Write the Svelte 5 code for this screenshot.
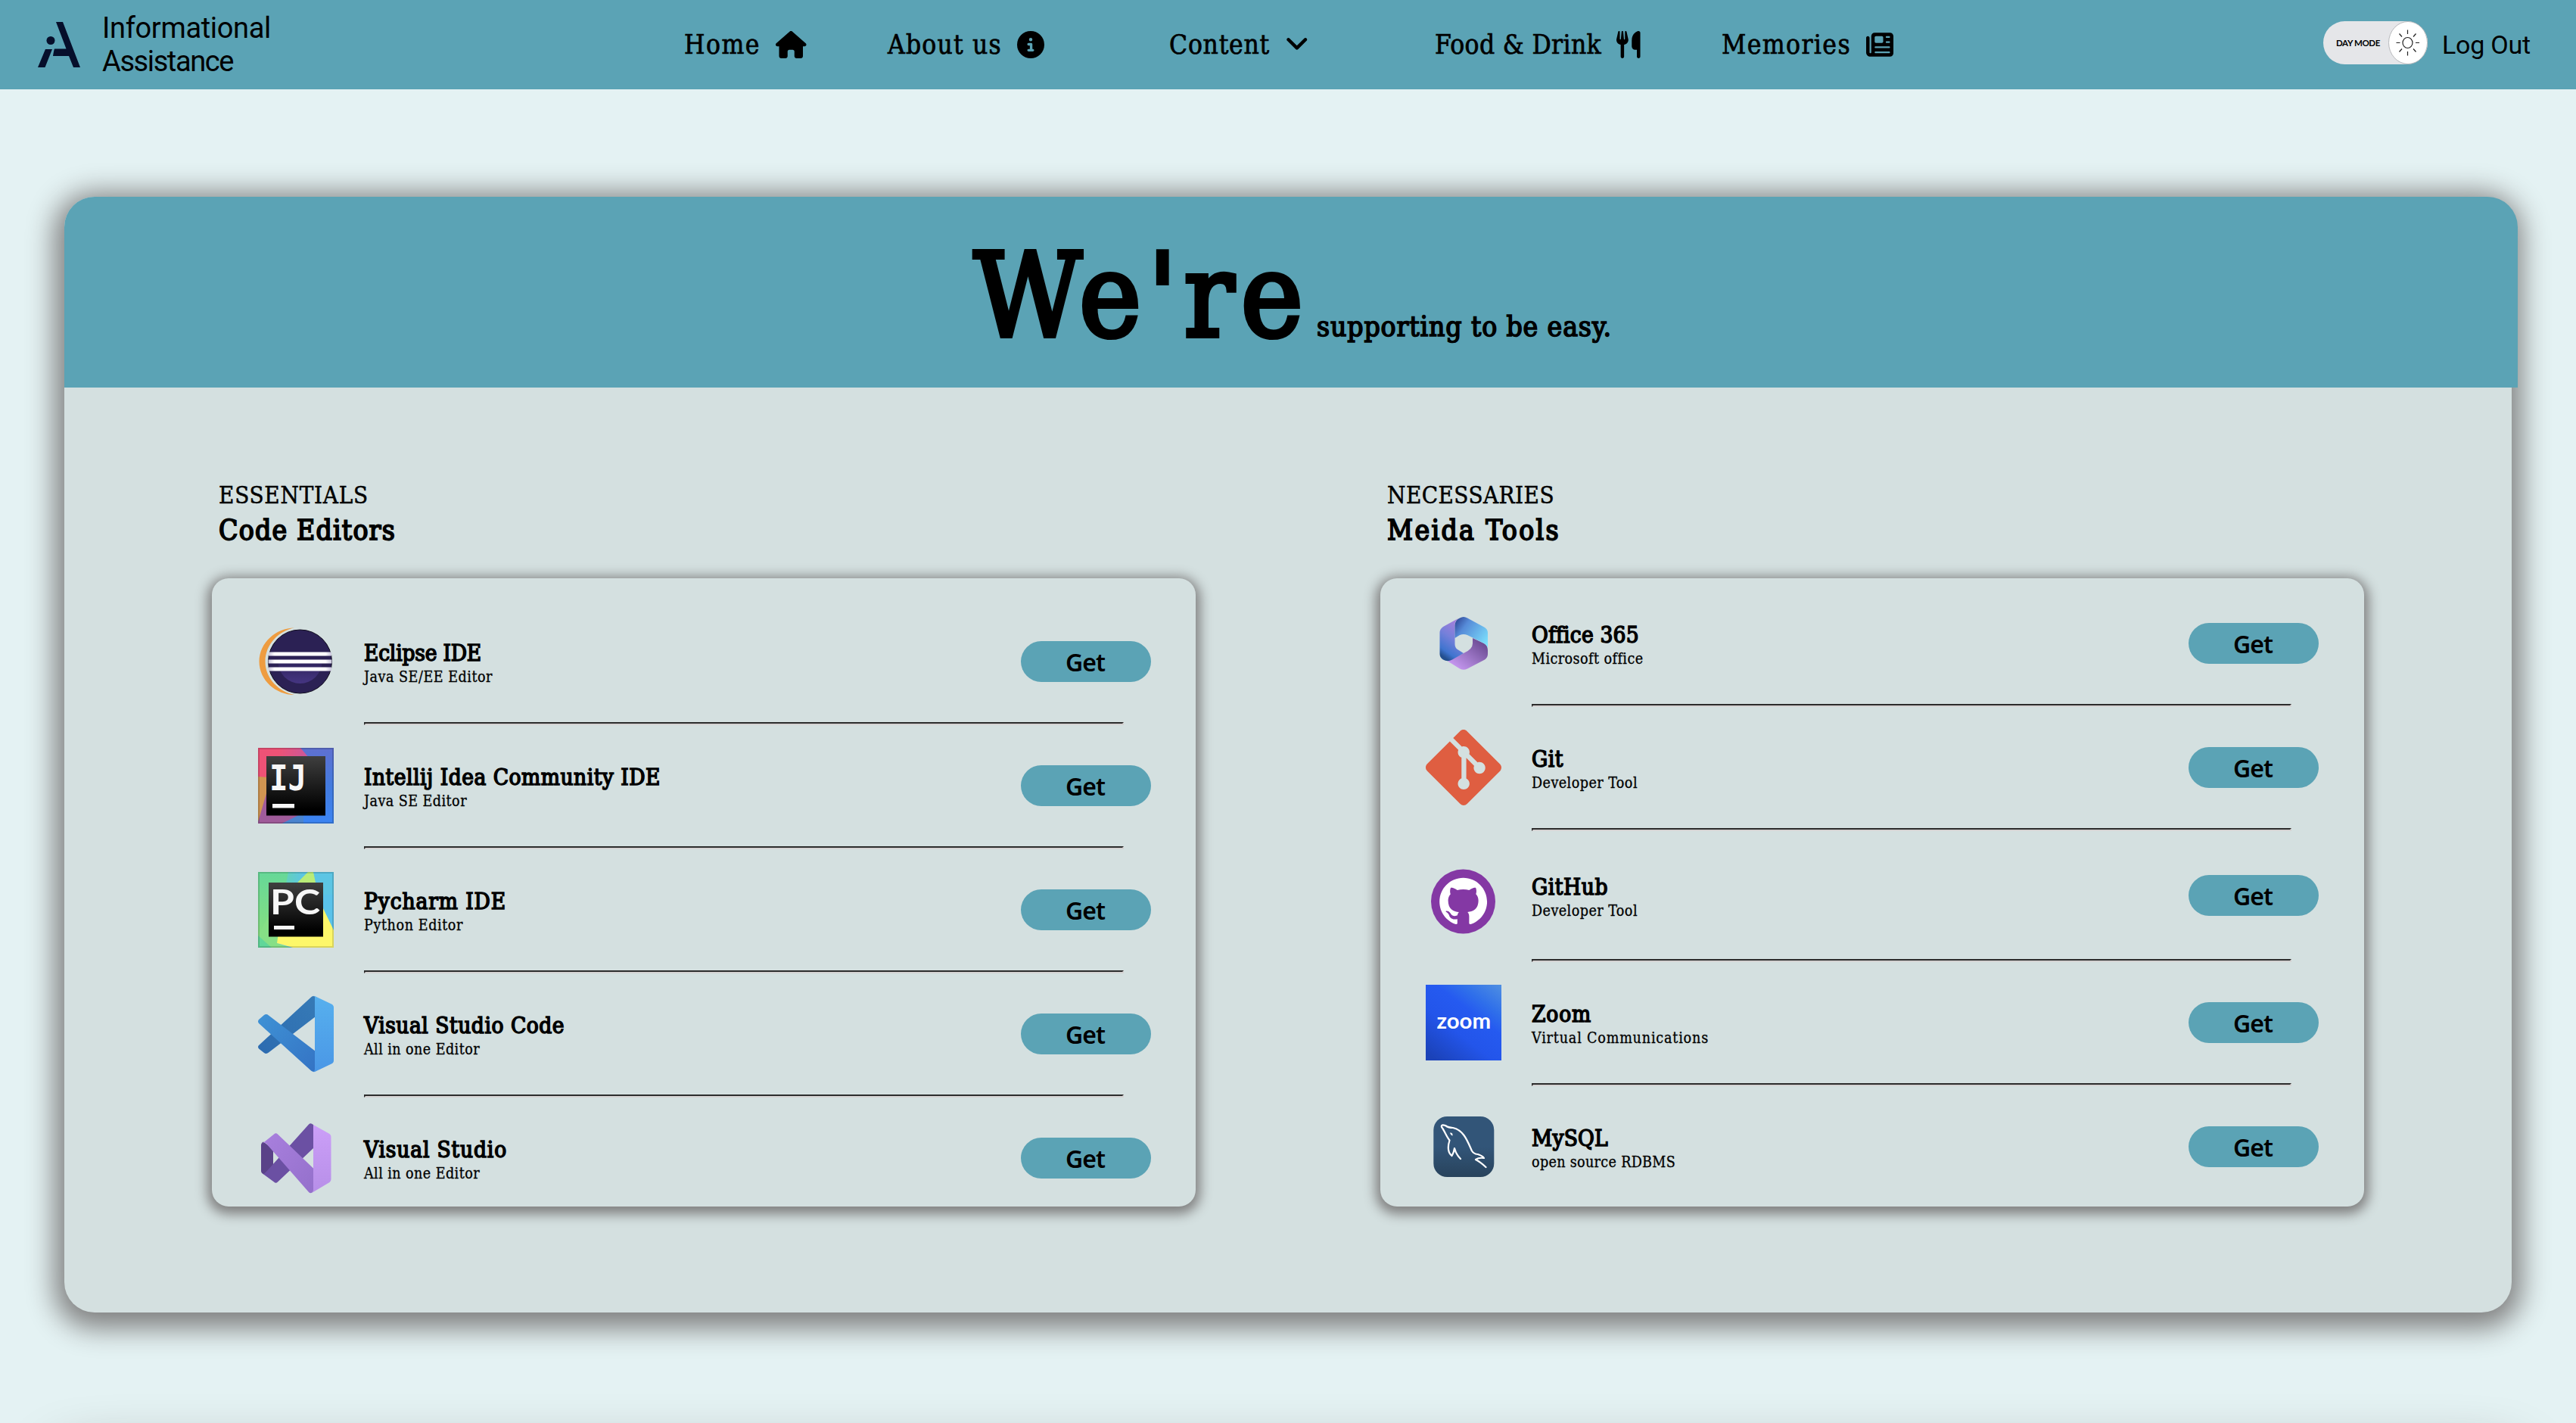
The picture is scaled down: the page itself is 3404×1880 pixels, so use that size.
<script>
  const nav = [
    { label: 'Home', width: 101, icon: 'house' },
    { label: 'About us', width: 151, icon: 'info' },
    { label: 'Content', width: 133, icon: 'chevron' },
    { label: 'Food & Drink', width: 220, icon: 'utensils' },
    { label: 'Memories', width: 171, icon: 'news' }
  ];

  const icons = {
    house: { w: 576, d: 'M575.8 255.5c0 18-15 32.1-32 32.1h-32l.7 160.2c0 2.7-.2 5.4-.5 8.1V472c0 22.1-17.9 40-40 40H392c-22.1 0-40-17.9-40-40V384c0-17.7-14.3-32-32-32H256c-17.7 0-32 14.3-32 32v88c0 22.1-17.9 40-40 40H104c-22.1 0-40-17.9-40-40V287.6H32c-18 0-32-14-32-32.1c0-9 3-17 10-24L266.4 8c7-7 15-8 22-8s15 2 21 7L564.8 231.5c8 7 12 15 11 24z' },
    info: { w: 512, d: 'M256 512A256 256 0 1 0 256 0a256 256 0 1 0 0 512zM216 336h24V272H216c-13.3 0-24-10.7-24-24s10.7-24 24-24h48c13.3 0 24 10.7 24 24v88h8c13.3 0 24 10.7 24 24s-10.7 24-24 24H216c-13.3 0-24-10.7-24-24s10.7-24 24-24zm40-208a32 32 0 1 1 0 64 32 32 0 1 1 0-64z' },
    chevron: { w: 448, d: 'M201.4 342.6c12.5 12.5 32.8 12.5 45.3 0l160-160c12.5-12.5 12.5-32.8 0-45.3s-32.8-12.5-45.3 0L224 274.7 86.6 137.4c-12.5-12.5-32.8-12.5-45.3 0s-12.5 32.8 0 45.3l160 160z' },
    utensils: { w: 448, d: 'M416 0C400 0 288 32 288 176V288c0 35.3 28.7 64 64 64h32V480c0 17.7 14.3 32 32 32s32-14.3 32-32V352 240 32c0-17.7-14.3-32-32-32zM64 16C64 7.8 57.9 1 49.7 .1S34.2 4.6 32.4 12.5L2.1 148.8C.7 155.1 0 161.5 0 167.9c0 45.9 35.1 83.6 80 87.7V480c0 17.7 14.3 32 32 32s32-14.3 32-32V255.6c44.9-4.1 80-41.8 80-87.7c0-6.4-.7-12.8-2.1-19.1L191.6 12.5c-1.8-8-9.3-13.3-17.4-12.4S160 7.8 160 16V150.2c0 5.4-4.4 9.8-9.8 9.8c-5.1 0-9.3-3.9-9.8-9L127.9 14.6C127.2 6.3 120.3 0 112 0s-15.2 6.3-15.9 14.6L83.7 151c-.5 5.1-4.7 9-9.8 9c-5.4 0-9.8-4.4-9.8-9.8V16z' },
    news: { w: 512, d: 'M96 96c0-35.3 28.7-64 64-64H448c35.3 0 64 28.7 64 64V416c0 35.3-28.7 64-64 64H80c-44.2 0-80-35.8-80-80V128c0-17.7 14.3-32 32-32s32 14.3 32 32V400c0 8.8 7.2 16 16 16s16-7.2 16-16V96zm64 24v80c0 13.3 10.7 24 24 24H296c13.3 0 24-10.7 24-24V120c0-13.3-10.7-24-24-24H184c-13.3 0-24 10.7-24 24zm208-8c0 8.8 7.2 16 16 16h48c8.8 0 16-7.2 16-16s-7.2-16-16-16H384c-8.8 0-16 7.2-16 16zm0 96c0 8.8 7.2 16 16 16h48c8.8 0 16-7.2 16-16s-7.2-16-16-16H384c-8.8 0-16 7.2-16 16zM160 304c0 8.8 7.2 16 16 16H432c8.8 0 16-7.2 16-16s-7.2-16-16-16H176c-8.8 0-16 7.2-16 16zm0 96c0 8.8 7.2 16 16 16H432c8.8 0 16-7.2 16-16s-7.2-16-16-16H176c-8.8 0-16 7.2-16 16z' }
  };

  const columns = [
    {
      kicker: 'ESSENTIALS', kickerWidth: 198, title: 'Code Editors', titleWidth: 234, side: 'left',
      items: [
        { name: 'Eclipse IDE', w: 155, note: 'Java SE/EE Editor', nw: 170, logo: eclipse },
        { name: 'Intellij Idea Community IDE', w: 392, note: 'Java SE Editor', nw: 136, logo: intellij },
        { name: 'Pycharm IDE', w: 188, note: 'Python Editor', nw: 131, logo: pycharm },
        { name: 'Visual Studio Code', w: 265, note: 'All in one Editor', nw: 153, logo: vscode },
        { name: 'Visual Studio', w: 189, note: 'All in one Editor', nw: 153, logo: vstudio }
      ]
    },
    {
      kicker: 'NECESSARIES', kickerWidth: 221, title: 'Meida Tools', titleWidth: 229, side: 'right',
      items: [
        { name: 'Office 365', w: 141, note: 'Microsoft office', nw: 147, logo: office },
        { name: 'Git', w: 42, note: 'Developer Tool', nw: 140, logo: git },
        { name: 'GitHub', w: 101, note: 'Developer Tool', nw: 140, logo: github, tall: true },
        { name: 'Zoom', w: 79, note: 'Virtual Communications', nw: 234, logo: zoom },
        { name: 'MySQL', w: 101, note: 'open source RDBMS', nw: 190, logo: mysql }
      ]
    }
  ];

  // Tracks a single line of text so that it spans the given width.
  function fit(node, width) {
    const natural = node.getBoundingClientRect().width;
    const count = node.textContent.length;
    node.style.letterSpacing = `${(width - natural) / count}px`;
  }
</script>

{#snippet eclipse()}
  <svg class="logo" viewBox="0 0 100 100">
    <defs>
      <linearGradient id="ecl" x1="0" y1="0" x2="0" y2="1"><stop offset=".4" stop-color="#2b2154" /><stop offset="1" stop-color="#453582" /></linearGradient>
      <linearGradient id="bar" x1="0" x2="1"><stop offset="0" stop-color="#c9c5dc" /><stop offset=".1" stop-color="#fff" /><stop offset=".9" stop-color="#fff" /><stop offset="1" stop-color="#c9c5dc" /></linearGradient>
    </defs>
    <path d="M48 5.500C24 5.500 1.500 25 1.500 50S24 94 48 94C28 90 9.500 73 9.500 50S28 9 48 5.500z" fill="#ee9c40" />
    <circle cx="55.500" cy="50" r="42" fill="#2b2154" stroke="#0f0b1c" />
    <circle cx="55.500" cy="50" r="29" fill="url(#ecl)" />
    <g fill="url(#bar)"><rect x="14" y="37.500" width="83" height="5" /><rect x="13.500" y="47.500" width="84" height="5" /><rect x="14" y="57.500" width="83" height="5" /></g>
  </svg>
{/snippet}

{#snippet intellij()}
  <svg class="logo" viewBox="0 0 100 100">
    <defs>
      <linearGradient id="ijb" x1="0" y1="0" x2="0" y2="1"><stop offset="0" stop-color="#5f70d0" /><stop offset=".5" stop-color="#437bdf" /><stop offset="1" stop-color="#3b84f2" /></linearGradient>
      <linearGradient id="ijp" x1="0" x2="1"><stop offset=".4" stop-color="#ee5276" /><stop offset="1" stop-color="#c9589c" /></linearGradient>
      <linearGradient id="blk" x1="0" y1="0" x2="0" y2="1"><stop offset="0" stop-color="#3f3f3f" /><stop offset=".9" stop-color="#000" /></linearGradient>
    </defs>
    <rect width="100" height="100" fill="url(#ijb)" />
    <path d="M0 0H56L68 14V40H0z" fill="url(#ijp)" />
    <path d="M0 38L14 39V60L0 98z" fill="#d09551" />
    <path d="M14 50L0 98V100H32L60 86V50z" fill="#a05b9a" />
    <path d="M32 100L54 89H60V100z" fill="#4a84cf" />
    <rect x="1" y="1" width="98" height="98" fill="none" stroke="#000" stroke-opacity=".16" stroke-width="2" />
    <rect x="11" y="11" width="78" height="78.500" fill="url(#blk)" />
    <text x="15" y="56" class="ij" textLength="49" lengthAdjust="spacingAndGlyphs">IJ</text>
    <rect x="19" y="74" width="29" height="5.500" fill="#f7f7f7" />
  </svg>
{/snippet}

{#snippet pycharm()}
  <svg class="logo" viewBox="0 0 100 100">
    <defs>
      <linearGradient id="pcg" x1="0" y1="0" x2="0" y2="1"><stop offset="0" stop-color="#66d898" /><stop offset="1" stop-color="#8ce07c" /></linearGradient>
      <linearGradient id="pct" x1="0" x2="1"><stop offset=".2" stop-color="#66d99b" /><stop offset=".6" stop-color="#5cc5e4" /></linearGradient>
    </defs>
    <rect width="100" height="100" fill="#5ac2ea" />
    <rect width="100" height="30" fill="url(#pct)" />
    <path d="M0 0H40L30 50V92L0 100z" fill="url(#pcg)" />
    <path d="M0 84L14 58V86H28L25 94L42 100H0z" fill="#86df86" />
    <path d="M0 84L18 100H0z" fill="#60d699" />
    <path d="M52 14L66 0H73L76 14z" fill="#b9ec78" />
    <path d="M86 48L100 77V100H46L25 94L27 80H86z" fill="#fdf76a" />
    <rect x="1" y="1" width="98" height="98" fill="none" stroke="#000" stroke-opacity=".14" stroke-width="2" />
    <rect x="14" y="14" width="72" height="71.500" fill="url(#blk)" />
    <text x="16" y="55.500" class="pc" textLength="66" lengthAdjust="spacingAndGlyphs">PC</text>
    <rect x="21" y="71" width="27" height="5" fill="#f7f7f7" />
  </svg>
{/snippet}

{#snippet vscode()}
  <svg class="logo" viewBox="0 0 100 100">
    <defs>
      <linearGradient id="vc1" x1="0" y1="0" x2="0" y2="1"><stop offset="0" stop-color="#57b0ee" /><stop offset="1" stop-color="#4a97e6" /></linearGradient>
      <linearGradient id="vc2" x1="0" y1="0" x2="1" y2="1"><stop offset="0" stop-color="#3f92d5" /><stop offset="1" stop-color="#3473c4" /></linearGradient>
      <linearGradient id="vc3" x1="0" y1="1" x2="1" y2="0"><stop offset="0" stop-color="#2c6bb0" /><stop offset="1" stop-color="#367ab6" /></linearGradient>
    </defs>
    <path d="M70 1.500Q73-1 76 1V27L14 74.500Q11 77 8 75L1 69.500Q-1 67 1 65z" fill="url(#vc3)" />
    <path d="M14 25.500Q11 23 8 25L1 31Q-1 33.500 1 36L70 98.500Q73 101 76 99V73z" fill="url(#vc2)" />
    <path d="M75 .500L73 0Q74-.500 76 .500L97 10.500Q100 12 100 15V85Q100 88 97 89.500L76 99.500Q74 100.500 73 100Q75 99 75 96.500z" fill="url(#vc1)" />
  </svg>
{/snippet}

{#snippet vstudio()}
  <svg class="logo" viewBox="0 0 100 100">
    <defs>
      <linearGradient id="vs1" x1="0" y1="0" x2="0" y2="1"><stop offset="0" stop-color="#cc9ff8" /><stop offset="1" stop-color="#b78fe8" /></linearGradient>
      <linearGradient id="vs2" x1="0" y1="0" x2="1" y2="1"><stop offset="0" stop-color="#a980de" /><stop offset="1" stop-color="#9470cb" /></linearGradient>
    </defs>
    <path d="M4 33Q4 30 7 28.500L20 38V60L8 71.500Q4 70 4 67z" fill="#5a4288" />
    <path d="M67 5.500Q69.500 3 73 6V37L26 81.500Q23.500 84 21 81.500L6 70.500Q8 71 10 69z" fill="#6b50a3" />
    <path d="M21 18.500Q23.500 16 26 18.500L73 63.500V94Q70 98 67 95L11 31Q9 29 6 30.500z" fill="url(#vs2)" />
    <path d="M73 6L94.500 18Q96.500 19.500 96.500 22V78Q96.500 80.500 94.500 82L71 96Q73 95 73 92z" fill="url(#vs1)" />
  </svg>
{/snippet}

{#snippet office()}
  <svg class="logo" viewBox="0 0 100 100">
    <defs>
      <linearGradient id="of1" x1=".8" y1="0" x2=".4" y2="1"><stop offset="0" stop-color="#ae7fdb" /><stop offset=".5" stop-color="#7580da" /><stop offset=".85" stop-color="#3f74cf" /><stop offset="1" stop-color="#234f8f" /></linearGradient>
      <linearGradient id="of2" x1="0" y1=".2" x2="1" y2=".9"><stop offset="0" stop-color="#34509f" /><stop offset=".25" stop-color="#568bd8" /><stop offset="1" stop-color="#7fe6ff" /></linearGradient>
      <linearGradient id="of3" x1="1" y1="0" x2="0" y2="1"><stop offset=".1" stop-color="#67488f" /><stop offset=".6" stop-color="#a57dcf" /><stop offset="1" stop-color="#d5a3ff" /></linearGradient>
    </defs>
    <path d="M62 43L77 50Q82 53 82 59V64Q82 69 78 71.500L55 83.500Q50 86 45 83.500L29 73.500L50 63Q62 58 62 50z" fill="url(#of3)" />
    <path d="M43 17L23 28Q18.500 31 18.500 36V64Q18.500 69 23 71.500Q29 75 35 71.500L50 63L42 58Q38.500 55.500 38.500 51V25Q39 20 43 17z" fill="url(#of1)" />
    <path d="M38.500 43V26Q39 19 45 16.500Q50 13.500 55 16.500L78 29Q82 31.500 82 36V57Q82 53 77 50L55 39Q50 37 45 39z" fill="url(#of2)" />
  </svg>
{/snippet}

{#snippet git()}
  <svg class="logo" viewBox="0 0 24 24">
    <path fill="#df5e41" d="M23.546 10.93L13.067.452c-.604-.603-1.582-.603-2.188 0L8.708 2.627l2.76 2.76c.645-.215 1.379-.07 1.889.441.516.515.658 1.258.438 1.9l2.658 2.66c.645-.223 1.387-.078 1.9.435.721.72.721 1.884 0 2.604-.719.719-1.881.719-2.6 0-.539-.541-.674-1.337-.404-1.996L12.86 8.955v6.525c.176.086.342.203.488.348.713.721.713 1.883 0 2.6-.719.721-1.889.721-2.609 0-.719-.719-.719-1.879 0-2.598.182-.18.387-.316.605-.406V8.835c-.217-.091-.424-.222-.6-.401-.545-.545-.676-1.342-.396-2.009L7.636 3.7.45 10.881c-.6.605-.6 1.584 0 2.189l10.48 10.477c.604.604 1.582.604 2.186 0l10.43-10.43c.605-.603.605-1.582 0-2.187" />
  </svg>
{/snippet}

{#snippet github()}
  <svg class="logo low" viewBox="0 0 100 100">
    <circle cx="49.500" cy="50" r="42.500" fill="#8438a4" />
    <path transform="translate(18.200 18) scale(2.620)" fill="#fff" d="M12 .297c-6.63 0-12 5.373-12 12 0 5.303 3.438 9.8 8.205 11.385.6.113.82-.258.82-.577 0-.285-.01-1.04-.015-2.04-3.338.724-4.042-1.61-4.042-1.61C4.422 18.07 3.633 17.7 3.633 17.7c-1.087-.744.084-.729.084-.729 1.205.084 1.838 1.236 1.838 1.236 1.07 1.835 2.809 1.305 3.495.998.108-.776.417-1.305.76-1.605-2.665-.3-5.466-1.332-5.466-5.93 0-1.31.465-2.38 1.235-3.22-.135-.303-.54-1.523.105-3.176 0 0 1.005-.322 3.3 1.23.96-.267 1.98-.399 3-.405 1.02.006 2.04.138 3 .405 2.28-1.552 3.285-1.23 3.285-1.23.645 1.653.24 2.873.12 3.176.765.84 1.23 1.91 1.23 3.22 0 4.61-2.805 5.625-5.475 5.92.42.36.81 1.096.81 2.22 0 1.606-.015 2.896-.015 3.286 0 .315.21.69.825.57C20.565 22.092 24 17.592 24 12.297c0-6.627-5.373-12-12-12" />
  </svg>
{/snippet}

{#snippet zoom()}
  <svg class="logo" viewBox="0 0 100 100">
    <defs>
      <linearGradient id="zm" x1="1" y1="0" x2=".2" y2="1.050"><stop offset="0" stop-color="#4f8fe2" /><stop offset=".25" stop-color="#2f6fea" /><stop offset=".4" stop-color="#255af0" /><stop offset=".65" stop-color="#2355ea" /><stop offset="1" stop-color="#1b42b8" /></linearGradient>
    </defs>
    <rect width="100" height="100" fill="url(#zm)" />
    <text x="14.500" y="58" class="zm" textLength="71.500" lengthAdjust="spacingAndGlyphs">zoom</text>
  </svg>
{/snippet}

{#snippet mysql()}
  <svg class="logo" viewBox="0 0 100 100">
    <defs>
      <linearGradient id="my" x1="0" y1="0" x2="0" y2="1"><stop offset=".5" stop-color="#325578" /><stop offset="1" stop-color="#28435c" /></linearGradient>
    </defs>
    <rect x="10.300" y="10" width="80" height="80" rx="18" fill="url(#my)" />
    <path class="dolphin" d="M46 66Q40 60 38 52Q37 58 34.500 62Q27 56 31.500 41.500C27 36 25 29 21 24Q20 20 26 22Q30 25 36 25C50 28 55 42 61 55.500Q64 60 69 60Q75 62 77 65Q70 64 66 67Q72 70 79.500 77" />
    <path d="M32 31.500Q36 31 35.500 35.500Q33 35 32 31.500z" fill="#fff" />
  </svg>
{/snippet}

<div class="page">
  <header>
    <div class="brand">
      <svg class="mark" viewBox="0 0 56 60" fill="#060f2b">
        <path d="M24 0H33L56 60H47L41 45H20Q21 38 22 35.500H37.500z" />
        <path d="M10 36H19L9.500 60H0z" />
        <circle cx="17" cy="24.500" r="5.500" />
      </svg>
      <div class="brand-name">
        <span use:fit={223}>Informational</span>
        <span use:fit={173}>Assistance</span>
      </div>
    </div>
    <nav>
      {#each nav as item}
        <a class="nav-item" href="#{item.icon}">
          <span class="label" use:fit={item.width}>{item.label}</span>
          <svg class="icon" viewBox="0 0 {icons[item.icon].w} 512"><path d={icons[item.icon].d} /></svg>
        </a>
      {/each}
    </nav>
    <div class="account">
      <div class="toggle">
        <span class="mode"><span use:fit={58}>DAY MODE</span></span>
        <svg class="knob" viewBox="0 0 52 57">
          <ellipse cx="26" cy="28.500" rx="25.500" ry="28" fill="#fff" stroke="#b9babd" />
          <ellipse cx="25.500" cy="28.500" rx="6.500" ry="7" class="ray" />
          <path class="ray" d="M25.500 11.500v5.500M25.500 40v5.500M10.500 28.500h5M36 28.500h5M14.500 16.500l3.500 4M36.500 16.500l-3.500 4M14.500 40.500l3.500-4M36.500 40.500l-3.500-4" />
        </svg>
      </div>
      <span class="logout"><span use:fit={117}>Log Out</span></span>
    </div>
  </header>

  <main>
    <div class="hero">
      <span class="big" use:fit={444}>We're</span>
      <span class="small" use:fit={390}>supporting to be easy.</span>
    </div>
    <div class="columns">
      {#each columns as col}
        <section>
          <h3><span use:fit={col.kickerWidth}>{col.kicker}</span></h3>
          <h2><span use:fit={col.titleWidth}>{col.title}</span></h2>
          <div class="list {col.side}">
            {#each col.items as item, i}
              {#if i > 0}<hr />{/if}
              <article class:tall={item.tall}>
                {@render item.logo()}
                <div class="info">
                  <div class="name"><span use:fit={item.w}>{item.name}</span></div>
                  <div class="note"><span use:fit={item.nw}>{item.note}</span></div>
                </div>
                <button><span use:fit={52}>Get</span></button>
              </article>
            {/each}
          </div>
        </section>
      {/each}
    </div>
  </main>
  <div class="next"></div>
</div>

<style>
  :global(body) {
    background: #e4f2f3;
    overflow: hidden;
  }
  .page {
    height: 1880px;
    overflow: hidden;
    color: #000;
    font-family: 'DejaVu Serif Condensed', 'DejaVu Serif', serif;
    font-stretch: condensed;
    white-space: nowrap;
  }
  .page span {
    display: inline-block;
  }
  header {
    box-sizing: border-box;
    height: 118px;
    padding: 0 60px 0 50px;
    display: grid;
    grid-template-columns: 854px 1fr auto;
    align-items: center;
    background: #5ba3b5;
  }
  .brand {
    display: flex;
    align-items: center;
    gap: 29px;
  }
  .mark {
    width: 56px;
    height: 60px;
  }
  .brand-name {
    display: flex;
    flex-direction: column;
    align-items: flex-start;
    font: 38px/44px Roboto, sans-serif;
  }
  nav {
    display: grid;
    grid-template-columns: 269px 372px 351px 379px auto;
    justify-content: start;
  }
  .nav-item {
    display: flex;
    align-items: center;
    gap: 20px;
    color: inherit;
    text-decoration: none;
    font-size: 35px;
    line-height: 46px;
    -webkit-text-stroke: 0.7px #000;
  }
  .icon {
    height: 36px;
    width: auto;
  }
  .account {
    display: flex;
    align-items: center;
    gap: 19px;
  }
  .toggle {
    width: 138px;
    height: 57px;
    margin-top: -5px;
    border-radius: 29px;
    background: #e5e6e9;
    display: flex;
    align-items: center;
    justify-content: space-between;
  }
  .mode {
    padding-left: 17px;
    font: 700 11.500px/16px Lato, sans-serif;
  }
  .knob {
    width: 52px;
    height: 57px;
  }
  .ray {
    fill: none;
    stroke: #222;
    stroke-width: 1.2;
  }
  .logout {
    font: 34px/44px Roboto, sans-serif;
  }
  main {
    box-sizing: border-box;
    width: 3234px;
    height: 1474px;
    margin: 142px 0 0 85px;
    border-radius: 40px;
    background: #d4e0e0;
    box-shadow: 0 8px 36px 13px #808080;
  }
  .hero {
    box-sizing: border-box;
    width: 3242px;
    height: 252px;
    padding: 5px 0 0 5px;
    display: flex;
    align-items: baseline;
    justify-content: center;
    gap: 9px;
    border-radius: 40px 40px 0 0;
    background: #5ba3b5;
  }
  .big {
    font-size: 154px;
    line-height: 252px;
    -webkit-text-stroke: 6px #000;
  }
  .small {
    font-size: 37px;
    line-height: 50px;
    -webkit-text-stroke: 1.6px #000;
  }
  .columns {
    display: flex;
    gap: 244px;
    padding: 120px 0 0 195px;
  }
  section {
    width: 1300px;
  }
  h2,
  h3 {
    margin: 0;
    padding-left: 9px;
    font-weight: 400;
  }
  h3 {
    font-size: 31px;
    line-height: 44px;
    -webkit-text-stroke: 0.5px #000;
  }
  h2 {
    font-size: 37px;
    line-height: 50px;
    -webkit-text-stroke: 1.8px #000;
  }
  .list {
    box-sizing: border-box;
    height: 830px;
    margin-top: 38px;
    padding: 60px 59px 0 61px;
    border-radius: 22px;
    background: #d4e0e0;
    box-shadow: 0 4px 16px 6px #808080;
  }
  .list.right {
    padding: 36px 60px 0;
  }
  article {
    height: 100px;
    display: flex;
    align-items: center;
  }
  article.tall {
    height: 109px;
  }
  .logo {
    width: 100px;
    height: 100px;
    margin-right: 40px;
    overflow: visible;
  }
  .logo.low {
    margin-top: 17px;
  }
  .info {
    flex: 1;
    padding-top: 6px;
  }
  .name {
    height: 35px;
    font-size: 29.500px;
    line-height: 35px;
    -webkit-text-stroke: 1.5px #000;
  }
  .note {
    height: 27px;
    font-size: 19.5px;
    line-height: 27px;
    -webkit-text-stroke: 0.3px #000;
  }
  hr {
    box-sizing: border-box;
    width: 1004px;
    height: 4px;
    margin: 30px 0 30px 140px;
    border: 2px solid;
    border-color: #2c2c2c #d4d2d2 #d4d2d2 #2c2c2c;
  }
  button {
    width: 172px;
    height: 54px;
    padding: 2px 2px 0 0;
    border: 0;
    border-radius: 27px;
    background: #5ba3b5;
    color: #000;
    font: 600 32px/52px 'Noto Sans', sans-serif;
  }
  .ij {
    font: 700 47px 'DejaVu Sans Mono', monospace;
    fill: #f7f7f7;
  }
  .pc {
    font: 700 46px Lato, sans-serif;
    fill: #f7f7f7;
  }
  .zm {
    font: 700 29px Lato, sans-serif;
    fill: #fff;
  }
  .dolphin {
    fill: none;
    stroke: #fff;
    stroke-width: 2.2;
    stroke-linejoin: round;
    stroke-linecap: round;
  }
  .next {
    width: 3234px;
    height: 100px;
    margin: 196px 0 0 85px;
    box-shadow: 0 0 80px #808080;
  }
</style>
